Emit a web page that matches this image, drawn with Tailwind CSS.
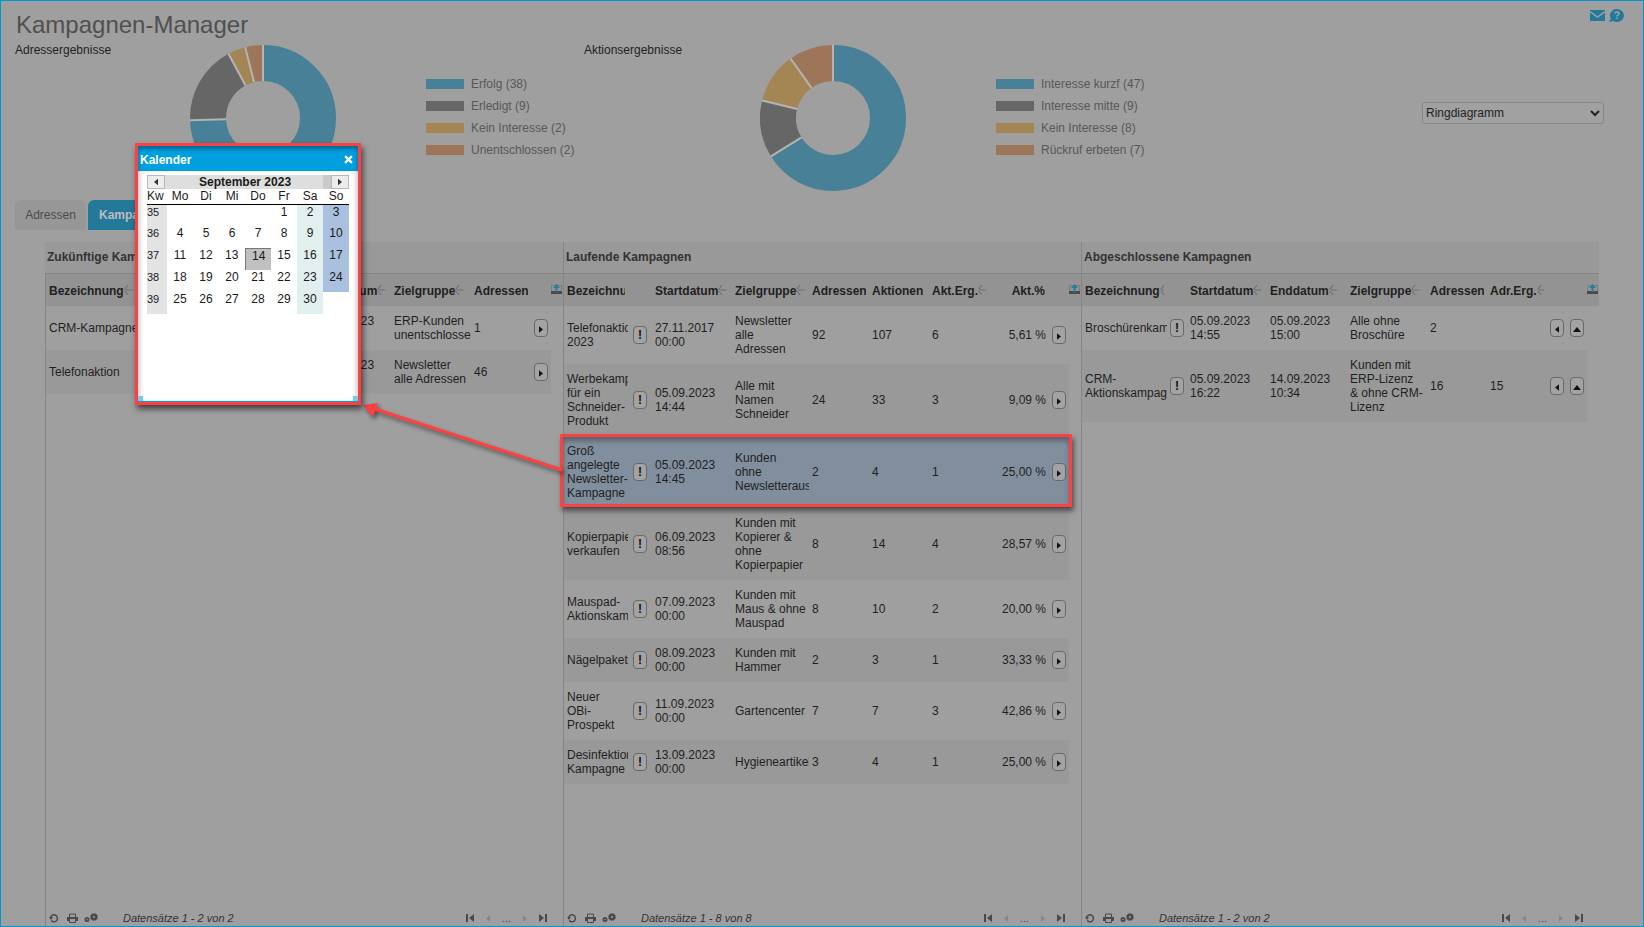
<!DOCTYPE html>
<html lang="de">
<head>
<meta charset="utf-8">
<meta name="viewport" content="width=device-width, initial-scale=1">
<title>Kampagnen-Manager</title>
<script src="https://cdn.jsdelivr.net/npm/@tailwindcss/browser@4"></script>
</head>
<body class="font-['Liberation_Sans',Arial,sans-serif] text-xs text-[#1f1f1f] bg-[#9f9f9f]">

<!-- icons -->
<svg class="hidden">
  <symbol id="i-sort" viewBox="0 0 9 12"><path d="M1 5L4 1M1 7L4 11" fill="none" stroke="#666" stroke-width="1"/><path d="M0 5.500h9M2 6.500h6" stroke="#808080" stroke-width="1"/></symbol>
  <symbol id="i-export" viewBox="0 0 11 11"><path d="M.5 1v7M10.500 1v7M0 1.500h11" stroke="#7d7d7d" fill="none"/><path d="M0 7h11v3H0z" fill="#4a4a4a"/><path d="M5.500 0L9 4H6.500V8H4.500V4H2z" fill="#1f7f9f"/></symbol>
  <symbol id="i-right" viewBox="0 0 5 8"><path d="M0 0l5 4-5 4z" fill="currentColor"/></symbol>
  <symbol id="i-left" viewBox="0 0 5 8"><path d="M5 0L0 4l5 4z" fill="currentColor"/></symbol>
  <symbol id="i-up" viewBox="0 0 8 5"><path d="M0 5l4-5 4 5z" fill="currentColor"/></symbol>
  <symbol id="i-reload" viewBox="0 0 10 10"><path d="M2.200 7.500A3.500 3.500 0 1 0 1.700 4" fill="none" stroke="currentColor" stroke-width="1.500"/><path d="M0 4h4L2 7z" fill="currentColor"/></symbol>
  <symbol id="i-print" viewBox="0 0 11 10"><path d="M2.500 4V1h6v3" fill="none" stroke="currentColor"/><path d="M0 4h11v4H9V6H2v2H0z" fill="currentColor"/><path d="M2.500 6v3.500h6V6" fill="none" stroke="currentColor"/></symbol>
  <symbol id="i-gears" viewBox="0 0 14 10"><circle cx="3" cy="6.500" r="2.500" fill="currentColor"/><circle cx="3" cy="6.500" r=".7" fill="#9f9f9f"/><circle cx="10" cy="4" r="3.300" fill="currentColor"/><circle cx="10" cy="4" r="3.500" fill="none" stroke="currentColor" stroke-dasharray="1.500 1.200"/><circle cx="10" cy="4" r="1" fill="#9f9f9f"/></symbol>
</svg>

<div class="relative flex flex-col min-h-screen border border-[#0096d6]">

  <header class="flex items-start justify-between pt-2 pl-[15px] pr-[19px]">
    <h1 class="text-2xl leading-8 text-[#505050]">Kampagnen-Manager</h1>
    <div class="flex gap-1 text-[#23799a]">
      <a href="#" aria-label="Nachrichten"><svg class="w-[15px] h-[13px]" viewBox="0 0 15 13"><path d="M0 1h15v11H0z" fill="currentColor"/><path d="M0 2.500l7.500 5.500L15 2.500" fill="none" stroke="#9f9f9f" stroke-width="1.500"/></svg></a>
      <a href="#" aria-label="Hilfe"><svg class="w-[15px] h-[13px]" viewBox="0 0 15 13"><path d="M8 0a6.800 6.500 0 1 1-3.500 12L0 13l1.800-3.500A6.500 6.500 0 0 1 8 0z" fill="currentColor"/><path d="M6 4.500c0-2 4-2 4 0 0 1.300-2 1.300-2 3M8 8.500v1.500" fill="none" stroke="#9f9f9f" stroke-width="1.500"/></svg></a>
    </div>
  </header>

  <section class="grid grid-cols-[569fr_569fr_451fr] pl-3.5 pr-[39px]">
    <div class="flex items-start">
      <h2 class="w-[175px] leading-[18px]">Adressergebnisse</h2>
      <svg class="w-[146px] h-[146px] mt-1 shrink-0" viewBox="-73 -73 146 146" id="donut-adressen"></svg>
      <ul class="mt-8 ml-[90px] text-[#585858]" id="legend-adressen"></ul>
    </div>
    <div class="flex items-start">
      <h2 class="w-[176px] leading-[18px]">Aktionsergebnisse</h2>
      <svg class="w-[146px] h-[146px] mt-1 shrink-0" viewBox="-73 -73 146 146" id="donut-aktionen"></svg>
      <ul class="mt-8 ml-[90px] text-[#585858]" id="legend-aktionen"></ul>
    </div>
    <div class="flex justify-end">
      <div class="relative w-[182px] h-[22px] mt-[61px]">
        <select aria-label="Diagrammtyp" class="appearance-none w-full h-full pl-[3px] border border-[#868686] rounded-[3px] bg-[#a1a1a1]">
          <option>Ringdiagramm</option>
          <option>Balkendiagramm</option>
        </select>
        <svg class="absolute right-1 top-2 w-[10px] h-[7px]" viewBox="0 0 10 7"><path d="M1 1l4 4 4-4" fill="none" stroke="#222" stroke-width="2"/></svg>
      </div>
    </div>
  </section>

  <nav class="flex gap-0.5 mt-[9px] pl-3.5">
    <button class="h-[30px] w-[71px] rounded-t-md rounded-b-sm bg-[#979797] text-[#4c4c4c]">Adressen</button>
    <button class="h-[30px] px-[11px] rounded-t-md bg-[#23799a] text-[#bcbcbc] font-bold">Kampagnen</button>
  </nav>

  <main class="grid grid-cols-3 grow mt-3 mx-11" id="panels"></main>

  <!-- calendar dialog -->
  <div role="dialog" aria-label="Kalender" class="absolute left-[134px] top-[142px] w-[226px] h-[262px] flex flex-col border-[3px] border-[#ff4040] bg-white shadow-[2px_4px_6px_rgba(0,0,0,0.6)]">
    <div class="flex items-center justify-between h-[25px] pt-0.5 pl-0.5 pr-[3px] bg-[#009fe0] text-white font-bold shadow-[inset_0_3px_4px_rgba(0,0,0,0.35)]">
      <span>Kalender</span>
      <button aria-label="Schließen" class="w-[14px] h-[14px] grid place-items-center"><svg class="w-[9px] h-[9px]" viewBox="0 0 8 8"><path d="M1 1l6 6M7 1L1 7" stroke="#fff" stroke-width="2"/></svg></button>
    </div>
    <div class="grow pt-1 pl-[9px] border-b border-[#009fe0] shadow-[inset_4px_0_4px_-2px_rgba(0,0,0,0.2),inset_-4px_0_4px_-2px_rgba(0,0,0,0.2)]">
      <table class="table-fixed w-[202px] text-center leading-[14px] text-[#1a1a1a]">
        <colgroup><col class="w-5"><col span="7" class="w-[26px]"></colgroup>
        <thead>
          <tr class="h-[14px] bg-[#dedede]">
            <td colspan="8">
              <div class="flex h-[14px]">
                <button aria-label="Voriger Monat" class="grid place-items-center w-[18px] h-[14px] border border-[#b8b8b8] bg-[#ececec] text-[#333]"><svg class="w-1 h-2"><use href="#i-left"/></svg></button>
                <b class="grow pl-0.5">September 2023</b>
                <span class="flex justify-end w-[26px] bg-[#cacaca]"><button aria-label="Nächster Monat" class="grid place-items-center w-[18px] h-[14px] border border-[#b8b8b8] bg-[#ececec] text-[#333]"><svg class="w-1 h-2"><use href="#i-right"/></svg></button></span>
              </div>
            </td>
          </tr>
          <tr class="h-[15px] border-b border-black">
            <th class="font-normal text-left">Kw</th><th class="font-normal">Mo</th><th class="font-normal">Di</th><th class="font-normal">Mi</th><th class="font-normal">Do</th><th class="font-normal">Fr</th><th class="font-normal">Sa</th><th class="font-normal">So</th>
          </tr>
        </thead>
        <tbody id="calendar"></tbody>
      </table>
    </div>
    <i class="absolute left-0 bottom-px w-[5px] h-[5px] bg-[#7cc8ea]"></i>
    <i class="absolute right-0 bottom-px w-[5px] h-[5px] bg-[#7cc8ea]"></i>
  </div>
</div>

<script>
const COLORS = ['#488098', '#666666', '#a38653', '#9d7558'];

const CHARTS = {
  adressen: [['Erfolg', 38], ['Erledigt', 9], ['Kein Interesse', 2], ['Unentschlossen', 2]],
  aktionen: [['Interesse kurzf', 47], ['Interesse mitte', 9], ['Kein Interesse', 8], ['Rückruf erbeten', 7]],
};

const icon = (name, cls) => `<svg class="${cls}"><use href="#i-${name}"/></svg>`;
const smallBtn = (label, inner) =>
  `<button aria-label="${label}" class="grid place-items-center w-[14px] h-[18px] border border-[#696969] rounded-[4px] bg-[#a3a3a3] font-bold text-[#111]">${inner}</button>`;
const INFO = smallBtn('Hinweis', '!');
const START = smallBtn('Starten', icon('right', 'w-1 h-[7px] mt-1'));
const BACK = smallBtn('Zurück', icon('left', 'w-1 h-[7px] mt-1'));
const UP = smallBtn('Archivieren', icon('up', 'w-2 h-[5px] mt-1'));

// columns: [title, width, sortable, cell classes]
const PANELS = [
  {
    title: 'Zukünftige Kampagnen', count: 2,
    cols: [['Bezeichnung', 241, 1], ['', 24], ['Startdatum', 80, 1], ['Zielgruppe', 80, 1], ['Adressen', 60], ['', 20]],
    rows: [
      ['CRM-Kampagne', '', '18.09.2023<br>00:00', 'ERP-Kunden unentschlossen', '1', START],
      ['Telefonaktion', '', '18.09.2023<br>00:00', 'Newsletter alle Adressen', '46', START],
    ],
  },
  {
    title: 'Laufende Kampagnen', count: 8, selected: 2,
    cols: [['Bezeichnung', 64, 1], ['', 24, 0, 'pl-[5px]'], ['Startdatum', 80, 1], ['Zielgruppe', 77, 1], ['Adressen', 60], ['Aktionen', 60], ['Akt.Erg.', 60, 1], ['Akt.%', 57, 0, 'text-right'], ['', 23, 0, 'pl-1.5']],
    rows: [
      ['Telefonaktion 2023', INFO, '27.11.2017<br>00:00', 'Newsletter<br>alle<br>Adressen', '92', '107', '6', '5,61 %', START],
      ['Werbekampagne für ein Schneider-Produkt', INFO, '05.09.2023<br>14:44', 'Alle mit Namen Schneider', '24', '33', '3', '9,09 %', START],
      ['Groß angelegte Newsletter-Kampagne', INFO, '05.09.2023<br>14:45', 'Kunden<br>ohne Newsletterausschluss', '2', '4', '1', '25,00 %', START],
      ['Kopierpapier verkaufen', INFO, '06.09.2023<br>08:56', 'Kunden mit Kopierer & ohne Kopierpapier', '8', '14', '4', '28,57 %', START],
      ['Mauspad-Aktionskampagne', INFO, '07.09.2023<br>00:00', 'Kunden mit Maus & ohne Mauspad', '8', '10', '2', '20,00 %', START],
      ['Nägelpaket', INFO, '08.09.2023<br>00:00', 'Kunden mit Hammer', '2', '3', '1', '33,33 %', START],
      ['Neuer<br>OBi-Prospekt', INFO, '11.09.2023<br>00:00', 'Gartencenter', '7', '7', '3', '42,86 %', START],
      ['Desinfektions Kampagne', INFO, '13.09.2023<br>00:00', 'Hygieneartikel', '3', '4', '1', '25,00 %', START],
    ],
  },
  {
    title: 'Abgeschlossene Kampagnen', count: 2,
    cols: [['Bezeichnung', 85, 1], ['', 20], ['Startdatum', 80, 1], ['Enddatum', 80, 1], ['Zielgruppe', 80, 1], ['Adressen', 60], ['Adr.Erg.', 60, 1], ['', 20], ['', 20]],
    rows: [
      ['Broschürenkampagne', INFO, '05.09.2023<br>14:55', '05.09.2023<br>15:00', 'Alle ohne Broschüre', '2', '', BACK, UP],
      ['CRM-Aktionskampagne', INFO, '05.09.2023<br>16:22', '14.09.2023<br>10:34', 'Kunden mit ERP-Lizenz<br>& ohne CRM-Lizenz', '16', '15', BACK, UP],
    ],
  },
];

function drawChart(name) {
  const data = CHARTS[name];
  const total = data.reduce((s, d) => s + d[1], 0);
  let start = 0, arcs = '', lines = '';
  data.forEach(([label, value], i) => {
    const angle = start / total * 360 - 90;
    arcs += `<circle r="55" fill="none" stroke="${COLORS[i]}" stroke-width="36" pathLength="${total}" stroke-dasharray="${value} ${total - value}" transform="rotate(${angle})"/>`;
    lines += `<path d="M37 0H73" stroke="#b4b4b4" stroke-width="2" transform="rotate(${angle})"/>`;
    start += value;
  });
  document.getElementById('donut-' + name).innerHTML = arcs + lines;
  document.getElementById('legend-' + name).innerHTML = data.map(([label, value], i) =>
    `<li class="flex items-center gap-[7px] h-[22px] leading-5 whitespace-nowrap"><span class="w-[38px] h-[10px]" style="background:${COLORS[i]}"></span>${label} (${value})</li>`).join('');
}

function drawPanel(p, index) {
  const heads = p.cols.map(([title, w, sort, cls]) =>
    `<th class="p-0 pt-0.5 ${cls === 'text-right' ? 'pr-px' : 'pl-[3px] pr-[3px]'} font-bold text-left"><div class="flex items-center overflow-hidden ${cls === 'text-right' ? 'justify-end' : ''}">${title}${sort ? icon('sort', 'w-[9px] h-3 mb-0.5 shrink-0') : ''}</div></th>`).join('');
  const rows = p.rows.map((row, r) => {
    const bg = r === p.selected ? 'bg-[#818e9e]' : r % 2 ? 'bg-[#999999]' : '';
    return `<tr class="${bg}">` + row.map((cell, c) =>
      `<td class="py-2 ${p.cols[c][3] || 'pl-[3px]'} overflow-hidden">${cell}</td>`).join('') +
      '<td class="bg-[#9f9f9f]"></td></tr>';
  }).join('');
  return `
  <section class="relative flex flex-col ${index ? 'border-l border-[#858585]' : ''}">
    <h3 class="h-[31px] pl-0.5 leading-[30px] font-bold text-[#333] bg-[#999999]">${p.title}</h3>
    <div class="flex flex-col grow ${index ? '' : 'border-l border-[#858585]'}">
      <table class="table-fixed w-full leading-[14px]">
        <colgroup>${p.cols.map(c => `<col style="width:${c[1]}px">`).join('')}<col style="width:12px"></colgroup>
        <thead><tr class="h-8 bg-[#939393] border-t border-[#858585]">${heads}<th class="p-0">${icon('export', 'w-[11px] h-[11px]')}</th></tr></thead>
        <tbody>${rows}</tbody>
      </table>
      <footer class="flex items-center mt-auto h-4 pl-[3px] pr-4 text-[11px] leading-4 text-[#4a4a4a]">
        <button aria-label="Aktualisieren">${icon('reload', 'w-[10px] h-[10px]')}</button>
        <button aria-label="Drucken" class="ml-2">${icon('print', 'w-[11px] h-[10px]')}</button>
        <button aria-label="Einstellungen" class="ml-1.5">${icon('gears', 'w-[14px] h-[10px]')}</button>
        <em class="ml-[25px] text-[#333]">Datensätze 1 - ${p.count} von ${p.count}</em>
        <span class="flex items-center gap-3 ml-auto">
          <button aria-label="Erste Seite" class="flex gap-px"><i class="w-0.5 h-2 bg-[#4a4a4a]"></i>${icon('left', 'w-[5px] h-2')}</button>
          <button aria-label="Vorige Seite" class="text-[#858585]">${icon('left', 'w-1 h-[7px]')}</button>
          <span>...</span>
          <button aria-label="Nächste Seite" class="text-[#858585]">${icon('right', 'w-1 h-[7px]')}</button>
          <button aria-label="Letzte Seite" class="flex gap-px">${icon('right', 'w-[5px] h-2')}<i class="w-0.5 h-2 bg-[#4a4a4a]"></i></button>
        </span>
      </footer>
    </div>
    ${p.selected ? `
    <div class="absolute -left-1 right-[9px] top-[192px] h-[73px] border-[3px] border-[#ff4040] pointer-events-none shadow-[2px_4px_5px_rgba(0,0,0,0.5),inset_0_4px_5px_rgba(0,0,0,0.3)]"></div>
    <svg class="absolute right-full top-[155px] w-[204px] h-[85px] drop-shadow-[2px_3px_2px_rgba(0,0,0,0.5)]" viewBox="0 0 204 85"><path d="M202 73L12 11" stroke="#ff4040" stroke-width="3"/><path d="M3 8l15-2-5 14z" fill="#ff4040"/></svg>` : ''}
  </section>`;
}

function drawCalendar() {
  let html = '';
  for (let week = 0; week < 5; week++) {
    html += `<tr class="h-[22px] align-top"><td class="bg-[#e3e3e3] text-left text-[11px]">${35 + week}</td>`;
    for (let d = 0; d < 7; d++) {
      const day = week * 7 + d - 3;
      const valid = day > 0 && day <= 30;
      let cls = '';
      if (valid && d === 5) cls = 'bg-[#e2efef]';
      if (valid && d === 6) cls = 'bg-[#a9c0de]';
      if (day === 14) cls = 'bg-[#c0c0c0] border-t border-l border-[#777] pl-px';
      html += `<td class="${cls}">${valid ? day : ''}</td>`;
    }
    html += '</tr>';
  }
  document.getElementById('calendar').innerHTML = html;
}

drawChart('adressen');
drawChart('aktionen');
document.getElementById('panels').innerHTML = PANELS.map(drawPanel).join('');
drawCalendar();
</script>
</body>
</html>
